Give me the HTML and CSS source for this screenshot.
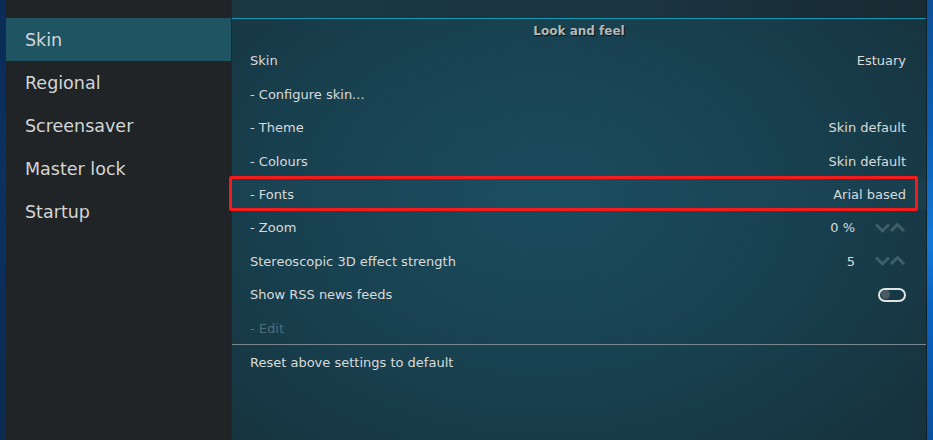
FILE: index.html
```html
<!DOCTYPE html>
<html>
<head>
<meta charset="utf-8">
<link rel="stylesheet" href="styles.css">
</head>
<body>
<div class="screen">
  <div class="desk-left"></div>
  <nav class="sidebar">
    <div class="side-top"></div>
    <div class="side-item active">Skin</div>
    <div class="side-item">Regional</div>
    <div class="side-item">Screensaver</div>
    <div class="side-item">Master lock</div>
    <div class="side-item">Startup</div>
  </nav>
  <main class="panel">
    <div class="panel-top"></div>
    <div class="panel-line"></div>
    <div class="panel-head">Look and feel</div>
    <div class="row"><span>Skin</span><span class="val">Estuary</span></div>
    <div class="row"><span>- Configure skin...</span></div>
    <div class="row"><span>- Theme</span><span class="val">Skin default</span></div>
    <div class="row"><span>- Colours</span><span class="val">Skin default</span></div>
    <div class="row focus"><span>- Fonts</span><span class="val">Arial based</span></div>
    <div class="row"><span>- Zoom</span><span class="spin"><span class="num">0 %</span><svg class="chev" width="31" height="12" viewBox="0 0 31 12"><polyline points="1,2.5 7.5,9 14,2.5" /><polyline points="16,9 22.5,2.5 29,9" /></svg></span></div>
    <div class="row"><span>Stereoscopic 3D effect strength</span><span class="spin"><span class="num">5</span><svg class="chev" width="31" height="12" viewBox="0 0 31 12"><polyline points="1,2.5 7.5,9 14,2.5" /><polyline points="16,9 22.5,2.5 29,9" /></svg></span></div>
    <div class="row"><span>Show RSS news feeds</span><span class="toggle"><span class="knob"></span></span></div>
    <div class="row disabled"><span>- Edit</span></div>
    <div class="sep"></div>
    <div class="row"><span>Reset above settings to default</span></div>
  </main>
  <div class="desk-right"></div>
</div>
</body>
</html>
```

FILE: styles.css
```css
html, body {
  margin: 0;
  padding: 0;
  background: #0b2a4f;
}
.screen {
  width: 933px;
  height: 440px;
  display: flex;
  overflow: hidden;
  font-family: "DejaVu Sans", sans-serif;
}
.desk-left {
  width: 6px;
  flex: none;
  background: linear-gradient(180deg, #0a2b55 0%, #0b3160 40%, #0a2a50 100%);
}
.sidebar {
  width: 225px;
  flex: none;
  background: #202427;
  display: flex;
  flex-direction: column;
}
.side-top {
  height: 18px;
}
.side-item {
  height: 43px;
  display: flex;
  align-items: center;
  padding-left: 19px;
  font-size: 17.5px;
  color: #d4d6d6;
}
.side-item.active {
  background: #1f5463;
}
.panel {
  width: 694px;
  flex: none;
  display: flex;
  flex-direction: column;
  background: radial-gradient(ellipse 70% 80% at 45% 45%, #1a4c5e 0%, #18404f 55%, #16323c 100%);
  border-left: 1px solid #1a2a30;
  border-right: 1px solid #0f2229;
  position: relative;
}
.panel-top {
  height: 18px;
  background: linear-gradient(90deg, #1b3842 0%, #1a3440 60%, #182a32 100%);
}
.panel-line {
  height: 1px;
  background: #1597b4;
}
.panel-head {
  height: 24.3px;
  display: flex;
  align-items: center;
  justify-content: center;
  font-weight: bold;
  font-size: 12px;
  color: #b4b8b8;
  text-shadow: 1px 1px 1px #0a1418;
}
.row {
  box-sizing: border-box;
  height: 33.4px;
  display: flex;
  align-items: center;
  justify-content: space-between;
  padding: 2px 20px 0 18px;
  font-size: 13px;
  color: #d9dbdb;
  position: relative;
}
.row.focus {
  background: rgba(40, 100, 120, 0.12);
}
.row.focus::after {
  content: "";
  position: absolute;
  left: -3px;
  right: 8px;
  top: -1px;
  bottom: -1px;
  border: 3px solid #f31b1b;
  border-radius: 2px;
}
.row.disabled {
  color: #4c6d78;
}
.val {
  color: #d9dbdb;
}
.spin {
  display: flex;
  align-items: center;
}
.num {
  margin-right: 20px;
}
.chev polyline {
  fill: none;
  stroke: #3f5f69;
  stroke-width: 3;
}
.toggle {
  width: 22px;
  height: 10px;
  border: 2px solid #e2e4e4;
  border-radius: 8px;
  display: flex;
  align-items: center;
  padding: 0 1px;
}
.knob {
  width: 9px;
  height: 9px;
  border-radius: 50%;
  background: #4a5a61;
}
.sep {
  height: 1px;
  background: #76888e;
}
.desk-right {
  flex: 1;
  background: linear-gradient(180deg, #0d4f95 0%, #0c5eb4 30%, #1479d8 55%, #0a63c2 70%, #0b4f9c 100%);
}
```
